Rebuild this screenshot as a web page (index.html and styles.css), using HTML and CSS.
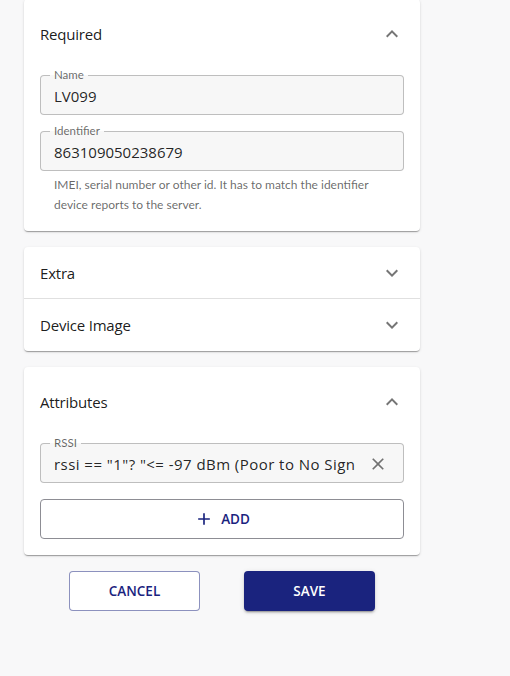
FILE: index.html
```html
<!DOCTYPE html>
<html lang="en">
<head>
<meta charset="utf-8">
<title>Device</title>
<link rel="stylesheet" href="styles.css">
</head>
<body>
<main class="stack">
  <section class="card">
    <div class="summary">
      <span class="title">Required</span>
      <svg class="chev" viewBox="0 0 24 24"><path d="M12 8l-6 6 1.41 1.41L12 10.83l4.59 4.58L18 14z"/></svg>
    </div>
    <div class="details">
      <fieldset class="field">
        <legend>Name</legend>
        <div class="row"><span class="value">LV099</span></div>
      </fieldset>
      <fieldset class="field field-next">
        <legend>Identifier</legend>
        <div class="row"><span class="value">863109050238679</span></div>
      </fieldset>
      <p class="helper">IMEI, serial number or other id. It has to match the identifier device reports to the server.</p>
    </div>
  </section>

  <section class="card">
    <div class="summary collapsed divided">
      <span class="title">Extra</span>
      <svg class="chev" viewBox="0 0 24 24"><path d="M16.59 8.59 12 13.17 7.41 8.59 6 10l6 6 6-6z"/></svg>
    </div>
    <div class="summary collapsed">
      <span class="title">Device Image</span>
      <svg class="chev" viewBox="0 0 24 24"><path d="M16.59 8.59 12 13.17 7.41 8.59 6 10l6 6 6-6z"/></svg>
    </div>
  </section>

  <section class="card">
    <div class="summary">
      <span class="title">Attributes</span>
      <svg class="chev" viewBox="0 0 24 24"><path d="M12 8l-6 6 1.41 1.41L12 10.83l4.59 4.58L18 14z"/></svg>
    </div>
    <div class="details">
      <fieldset class="field">
        <legend>RSSI</legend>
        <div class="row">
          <span class="value clip">rssi == "1"? "&lt;= -97 dBm (Poor to No Sign</span>
          <svg class="close" viewBox="0 0 24 24"><path d="M19 6.41 17.59 5 12 10.59 6.41 5 5 6.41 10.59 12 5 17.59 6.41 19 12 13.41 17.59 19 19 17.59 13.41 12z"/></svg>
        </div>
      </fieldset>
      <button class="btn-add" type="button">
        <svg class="plus" viewBox="0 0 24 24"><path d="M19 13h-6v6h-2v-6H5v-2h6V5h2v6h6v2z"/></svg>
        <span>ADD</span>
      </button>
    </div>
  </section>

  <div class="actions">
    <button class="btn btn-outline" type="button">CANCEL</button>
    <button class="btn btn-primary" type="button">SAVE</button>
  </div>
</main>
</body>
</html>
```

FILE: styles.css
```css
* { box-sizing: border-box; }

html, body {
  margin: 0;
  padding: 0;
}

body {
  background: #f8f8f9;
  font-family: "Open Sans", "Segoe UI", sans-serif;
  color: rgba(0, 0, 0, 0.87);
  width: 510px;
  height: 676px;
  overflow: hidden;
}

.stack {
  margin: -1px 0 0 24px;
  width: 396px;
  display: flex;
  flex-direction: column;
  gap: 16px;
}

.card {
  background: #fff;
  border-radius: 4px;
  box-shadow: 0 2px 1px -1px rgba(0,0,0,0.2), 0 1px 1px 0 rgba(0,0,0,0.14), 0 1px 3px 0 rgba(0,0,0,0.12);
}

.summary {
  height: 70px;
  display: flex;
  align-items: center;
  justify-content: space-between;
  padding: 0 16px;
}

.summary.collapsed {
  height: 52px;
}

.summary.divided {
  border-bottom: 1px solid rgba(0,0,0,0.12);
}

.title {
  font-size: 15px;
  line-height: 24px;
  letter-spacing: -0.2px;
  color: rgba(0,0,0,0.9);
}

.chev {
  width: 24px;
  height: 24px;
  fill: rgba(0,0,0,0.54);
}

.details {
  padding: 0 16px 16px;
  display: flex;
  flex-direction: column;
}

.field {
  margin: 0;
  padding: 0 13px 0 9px;
  border: 1px solid rgba(0,0,0,0.23);
  border-radius: 4px;
  background: #f7f7f7;
  min-width: 0;
}

.field-next {
  margin-top: 10px;
}

.field legend {
  font-family: "Lato", "Segoe UI", sans-serif;
  font-size: 11.5px;
  line-height: 12px;
  padding: 0 4px;
  color: rgba(0,0,0,0.6);
}

.row {
  display: flex;
  align-items: center;
  padding: 5px 0 8px 4px;
  height: 33px;
}

.value {
  font-size: 15px;
  line-height: 20px;
  white-space: nowrap;
}

.value.clip {
  flex: 1;
  overflow: hidden;
  min-width: 0;
  letter-spacing: 0.45px;
}

.close {
  width: 20px;
  height: 20px;
  margin: 0 2px 0 7px;
  fill: rgba(0,0,0,0.54);
  flex: none;
}

.helper {
  margin: 4px 14px 0;
  font-family: "Lato", "Segoe UI", sans-serif;
  font-size: 12px;
  line-height: 20px;
  color: rgba(0,0,0,0.6);
}

button {
  font-family: inherit;
  cursor: pointer;
}

.btn-add {
  margin-top: 16px;
  height: 40px;
  background: #fff;
  border: 1px solid #8d8d94;
  border-radius: 4px;
  color: #1a237e;
  font-size: 13.5px;
  font-weight: 600;
  display: flex;
  align-items: center;
  justify-content: center;
  gap: 7px;
}

.plus {
  width: 20px;
  height: 20px;
  fill: #1a237e;
}

.actions {
  display: flex;
  justify-content: center;
  gap: 44px;
}

.btn {
  width: 131px;
  height: 40px;
  border-radius: 4px;
  font-size: 13.5px;
  font-weight: 600;
}

.btn-outline {
  background: #fff;
  border: 1px solid rgba(26,35,126,0.5);
  color: #1a237e;
}

.btn-primary {
  background: #1a237e;
  border: none;
  color: #fff;
  box-shadow: 0 3px 1px -2px rgba(0,0,0,0.2), 0 2px 2px 0 rgba(0,0,0,0.14), 0 1px 5px 0 rgba(0,0,0,0.12);
}
```
